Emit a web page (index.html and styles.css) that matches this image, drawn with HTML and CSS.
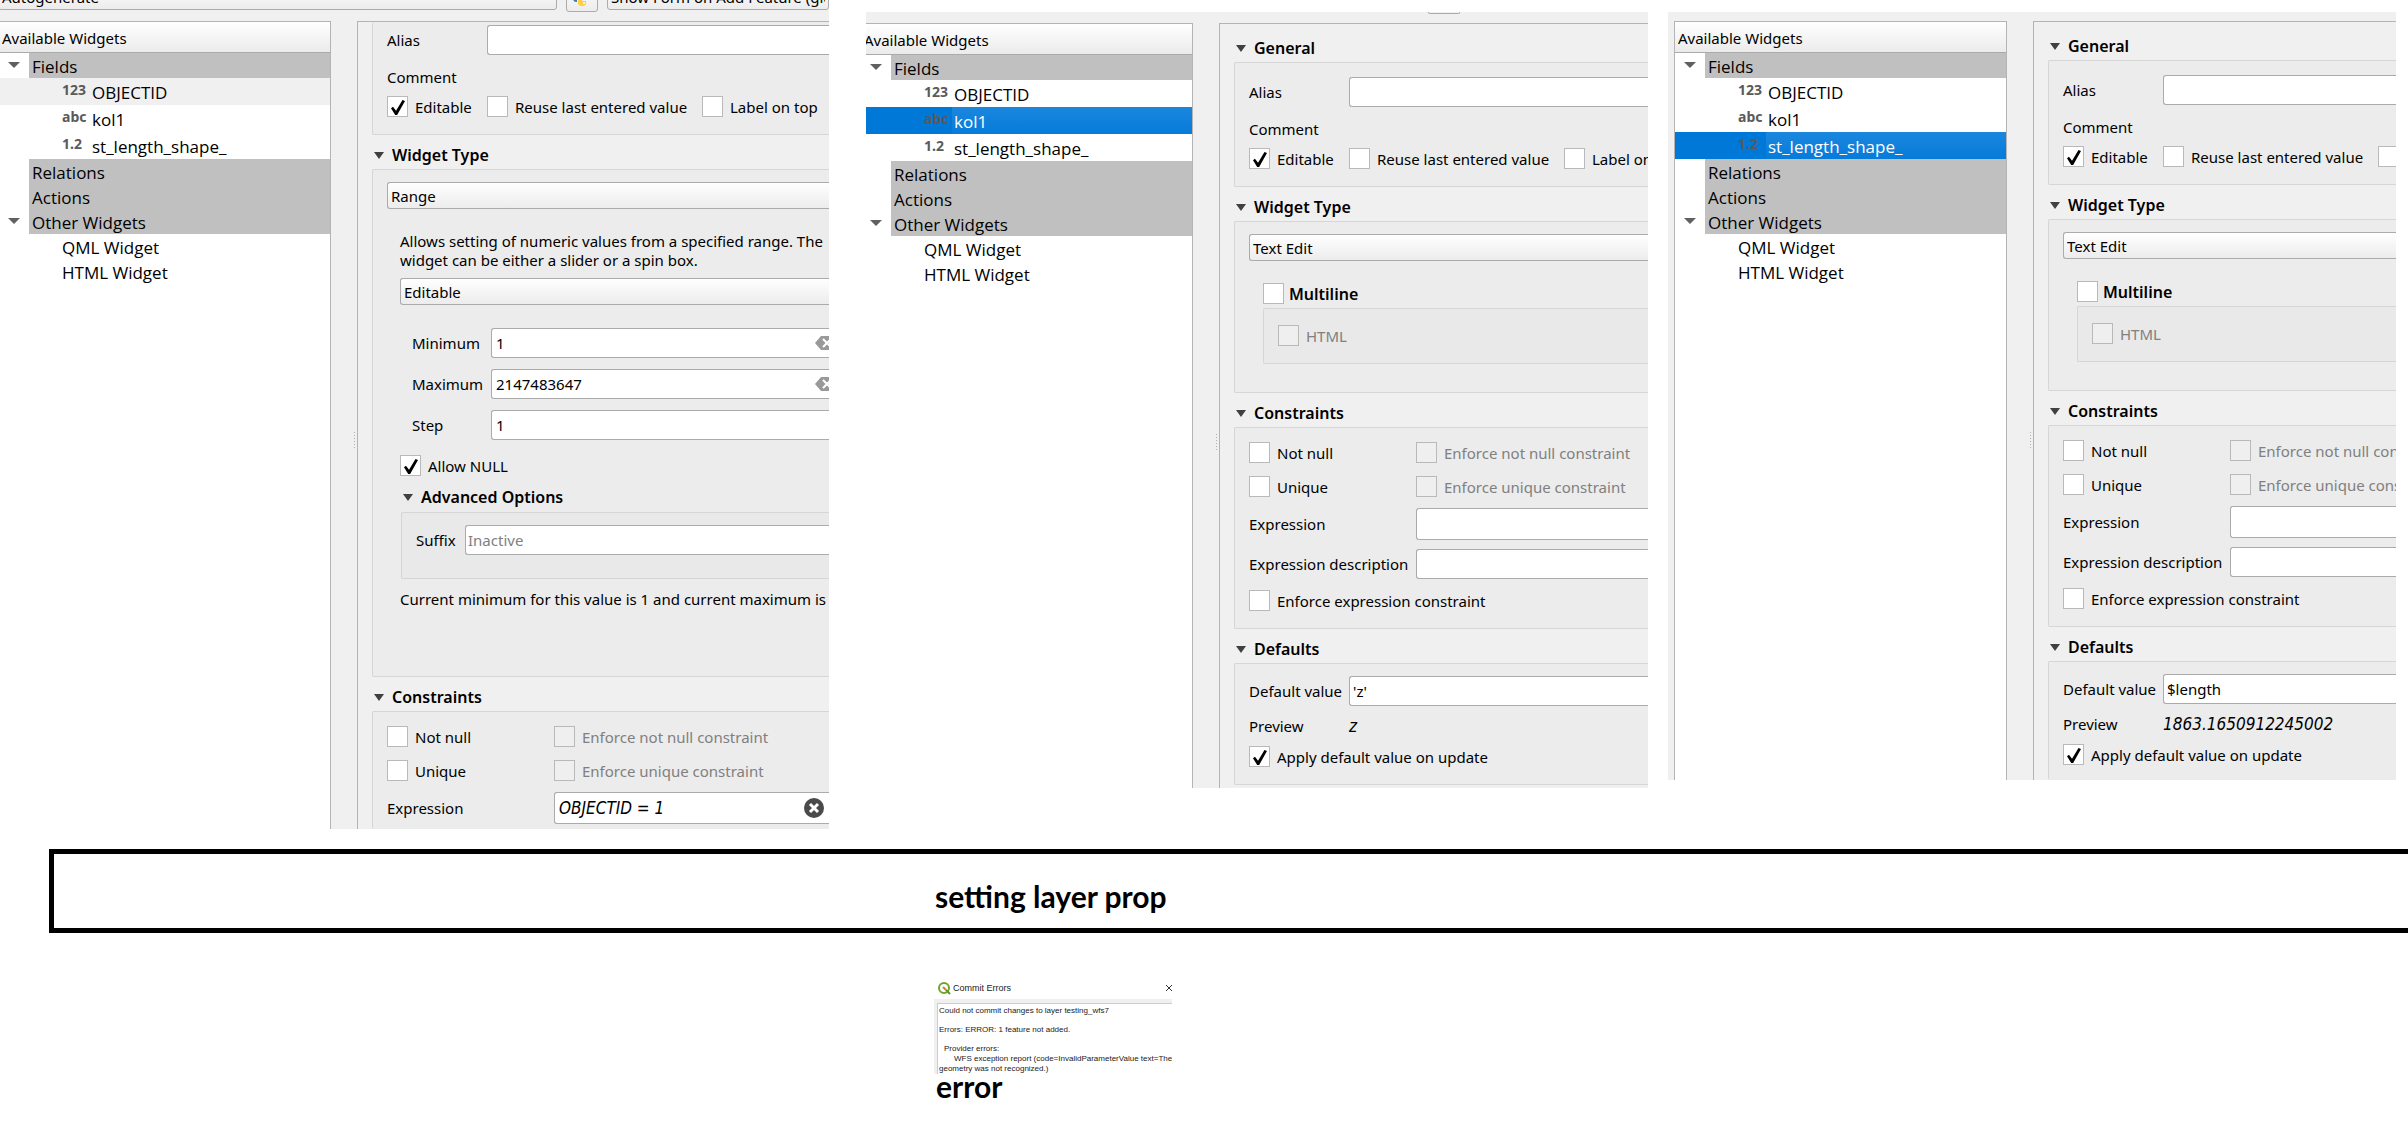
FILE: index.html
```html
<!DOCTYPE html>
<html lang="en">

<head>
    <meta charset="UTF-8">
    <meta name="viewport" content="width=device-width, initial-scale=1.0">
    <title>Setting layer prop</title>
    <link rel="stylesheet" href="styles.css">
</head>

<body>
    <main class="shots">

        <!-- OBJECTID -->
        <section class="shot shot-objectid">
            <div class="toolbar">
                <select class="combo layout-combo" aria-label="Form layout">
                    <option>Autogenerate</option>
                </select>
                <button class="tool-button" type="button" aria-label="Python init function">
                    <svg width="20" height="20" viewBox="0 0 20 20">
                        <path fill="#3f7cac" d="M10 1c-4 0-4 2-4 3v2h4v1H4c-2 0-3 2-3 4s1 4 3 4h1v-3c0-1 1-2 2-2h5c1 0 2-1 2-2V4c0-2-1-3-4-3z" />
                        <path fill="#ffd040" d="M10 19c4 0 4-2 4-3v-2h-4v-1h6c2 0 3-2 3-4s-1-4-3-4h-1v3c0 1-1 2-2 2H8c-1 0-2 1-2 2v4c0 2 1 3 4 3z" />
                        <circle cx="12" cy="16" r="1" fill="#fff" />
                    </svg>
                </button>
                <select class="combo form-combo" aria-label="Show form">
                    <option>Show Form on Add Feature (global settings)</option>
                </select>
            </div>
            <div class="columns">
                <div class="tree">
                    <div class="tree-header">Available Widgets</div>
                    <ul class="rows">
                        <li class="row top open"><span class="name">Fields</span></li>
                        <li class="row field hover"><span class="type">123</span><span class="name">OBJECTID</span></li>
                        <li class="row field"><span class="type">abc</span><span class="name">kol1</span></li>
                        <li class="row field"><span class="type">1.2</span><span class="name">st_length_shape_</span></li>
                        <li class="row top"><span class="name">Relations</span></li>
                        <li class="row top"><span class="name">Actions</span></li>
                        <li class="row top open"><span class="name">Other Widgets</span></li>
                        <li class="row child"><span class="name">QML Widget</span></li>
                        <li class="row child"><span class="name">HTML Widget</span></li>
                    </ul>
                </div>
                <div class="splitter"></div>
                <div class="panel scrolled">
                    <div class="group general cut-top">
                        <div class="form-row">
                            <label for="alias1">Alias</label>
                            <input class="text" type="text" id="alias1">
                        </div>
                        <p class="comment">Comment</p>
                        <div class="checks">
                            <label class="check"><input type="checkbox" checked>Editable</label>
                            <label class="check"><input type="checkbox">Reuse last entered value</label>
                            <label class="check"><input type="checkbox">Label on top</label>
                        </div>
                    </div>

                    <h2 class="title">Widget Type</h2>
                    <div class="group widget-type">
                        <select class="combo" aria-label="Widget type">
                            <option>Range</option>
                        </select>
                        <div class="range">
                            <p class="hint">Allows setting of numeric values from a specified range. The<br>widget can be either a slider or a spin box.</p>
                            <select class="combo" aria-label="Range style">
                                <option>Editable</option>
                            </select>
                            <div class="limits">
                                <label for="min">Minimum</label>
                                <div class="clearable">
                                    <input class="text" type="text" id="min" value="1">
                                    <svg class="clear" width="22" height="14" viewBox="0 0 22 14">
                                        <path fill="#999" d="M6 0h16v14H6L0 7z" />
                                        <path stroke="#fff" stroke-width="2" d="M8 3l8 8M16 3l-8 8" />
                                    </svg>
                                </div>
                                <label for="max">Maximum</label>
                                <div class="clearable">
                                    <input class="text" type="text" id="max" value="2147483647">
                                    <svg class="clear" width="22" height="14" viewBox="0 0 22 14">
                                        <path fill="#999" d="M6 0h16v14H6L0 7z" />
                                        <path stroke="#fff" stroke-width="2" d="M8 3l8 8M16 3l-8 8" />
                                    </svg>
                                </div>
                                <label for="step">Step</label>
                                <input class="text" type="text" id="step" value="1">
                            </div>
                            <label class="check"><input type="checkbox" checked>Allow NULL</label>
                            <h3 class="title">Advanced Options</h3>
                            <div class="group inner suffix">
                                <label for="suffix">Suffix</label>
                                <input class="text" type="text" id="suffix" placeholder="Inactive">
                            </div>
                            <p class="current">Current minimum for this value is 1 and current maximum is</p>
                        </div>
                    </div>

                    <h2 class="title">Constraints</h2>
                    <div class="group constraints cut-bottom">
                        <label class="check"><input type="checkbox">Not null</label>
                        <label class="check"><input type="checkbox" disabled>Enforce not null constraint</label>
                        <label class="check"><input type="checkbox">Unique</label>
                        <label class="check"><input type="checkbox" disabled>Enforce unique constraint</label>
                        <label for="expr1">Expression</label>
                        <div class="clearable">
                            <input class="text tall expression" type="text" id="expr1" value="OBJECTID = 1">
                            <button class="remove" type="button" aria-label="Clear expression">
                                <svg width="22" height="22" viewBox="0 0 22 22">
                                    <circle cx="11" cy="11" r="10" fill="#4a4a4a" />
                                    <path stroke="#fff" stroke-width="3" d="M7 7l8 8M15 7l-8 8" />
                                </svg>
                            </button>
                        </div>
                    </div>
                </div>
            </div>
        </section>

        <!-- kol1 -->
        <section class="shot shot-kol1">
            <div class="button-edge"></div>
            <div class="columns">
                <div class="tree">
                    <div class="tree-header">Available Widgets</div>
                    <ul class="rows">
                        <li class="row top open"><span class="name">Fields</span></li>
                        <li class="row field"><span class="type">123</span><span class="name">OBJECTID</span></li>
                        <li class="row field selected"><span class="type">abc</span><span class="name">kol1</span></li>
                        <li class="row field"><span class="type">1.2</span><span class="name">st_length_shape_</span></li>
                        <li class="row top"><span class="name">Relations</span></li>
                        <li class="row top"><span class="name">Actions</span></li>
                        <li class="row top open"><span class="name">Other Widgets</span></li>
                        <li class="row child"><span class="name">QML Widget</span></li>
                        <li class="row child"><span class="name">HTML Widget</span></li>
                    </ul>
                </div>
                <div class="splitter"></div>
                <div class="panel">
                    <h2 class="title">General</h2>
                    <div class="group general">
                        <div class="form-row">
                            <label for="alias2">Alias</label>
                            <input class="text" type="text" id="alias2">
                        </div>
                        <p class="comment">Comment</p>
                        <div class="checks">
                            <label class="check"><input type="checkbox" checked>Editable</label>
                            <label class="check"><input type="checkbox">Reuse last entered value</label>
                            <label class="check"><input type="checkbox">Label on top</label>
                        </div>
                    </div>

                    <h2 class="title">Widget Type</h2>
                    <div class="group widget-type">
                        <select class="combo" aria-label="Widget type">
                            <option>Text Edit</option>
                        </select>
                        <div class="text-edit">
                            <label class="check strong"><input type="checkbox">Multiline</label>
                            <div class="group inner html">
                                <label class="check"><input type="checkbox" disabled>HTML</label>
                            </div>
                        </div>
                    </div>

                    <h2 class="title">Constraints</h2>
                    <div class="group constraints">
                        <label class="check"><input type="checkbox">Not null</label>
                        <label class="check"><input type="checkbox" disabled>Enforce not null constraint</label>
                        <label class="check"><input type="checkbox">Unique</label>
                        <label class="check"><input type="checkbox" disabled>Enforce unique constraint</label>
                        <label for="expr2">Expression</label>
                        <input class="text tall" type="text" id="expr2">
                        <label for="desc2">Expression description</label>
                        <input class="text" type="text" id="desc2">
                        <label class="check wide"><input type="checkbox">Enforce expression constraint</label>
                    </div>

                    <h2 class="title">Defaults</h2>
                    <div class="group defaults">
                        <div class="form-row">
                            <label for="default2">Default value</label>
                            <input class="text" type="text" id="default2" value="'z'">
                        </div>
                        <div class="form-row preview"><span>Preview</span><em>z</em></div>
                        <label class="check"><input type="checkbox" checked>Apply default value on update</label>
                    </div>
                </div>
            </div>
        </section>

        <!-- st_length_shape_ -->
        <section class="shot shot-length">
            <div class="columns">
                <div class="tree">
                    <div class="tree-header">Available Widgets</div>
                    <ul class="rows">
                        <li class="row top open"><span class="name">Fields</span></li>
                        <li class="row field"><span class="type">123</span><span class="name">OBJECTID</span></li>
                        <li class="row field"><span class="type">abc</span><span class="name">kol1</span></li>
                        <li class="row field selected"><span class="type">1.2</span><span class="name">st_length_shape_</span></li>
                        <li class="row top"><span class="name">Relations</span></li>
                        <li class="row top"><span class="name">Actions</span></li>
                        <li class="row top open"><span class="name">Other Widgets</span></li>
                        <li class="row child"><span class="name">QML Widget</span></li>
                        <li class="row child"><span class="name">HTML Widget</span></li>
                    </ul>
                </div>
                <div class="splitter"></div>
                <div class="panel">
                    <h2 class="title">General</h2>
                    <div class="group general">
                        <div class="form-row">
                            <label for="alias3">Alias</label>
                            <input class="text" type="text" id="alias3">
                        </div>
                        <p class="comment">Comment</p>
                        <div class="checks">
                            <label class="check"><input type="checkbox" checked>Editable</label>
                            <label class="check"><input type="checkbox">Reuse last entered value</label>
                            <label class="check"><input type="checkbox" aria-label="Label on top"></label>
                        </div>
                    </div>

                    <h2 class="title">Widget Type</h2>
                    <div class="group widget-type">
                        <select class="combo" aria-label="Widget type">
                            <option>Text Edit</option>
                        </select>
                        <div class="text-edit">
                            <label class="check strong"><input type="checkbox">Multiline</label>
                            <div class="group inner html">
                                <label class="check"><input type="checkbox" disabled>HTML</label>
                            </div>
                        </div>
                    </div>

                    <h2 class="title">Constraints</h2>
                    <div class="group constraints">
                        <label class="check"><input type="checkbox">Not null</label>
                        <label class="check"><input type="checkbox" disabled>Enforce not null constraint</label>
                        <label class="check"><input type="checkbox">Unique</label>
                        <label class="check"><input type="checkbox" disabled>Enforce unique constraint</label>
                        <label for="expr3">Expression</label>
                        <input class="text tall" type="text" id="expr3">
                        <label for="desc3">Expression description</label>
                        <input class="text" type="text" id="desc3">
                        <label class="check wide"><input type="checkbox">Enforce expression constraint</label>
                    </div>

                    <h2 class="title">Defaults</h2>
                    <div class="group defaults cut-bottom">
                        <div class="form-row">
                            <label for="default3">Default value</label>
                            <input class="text" type="text" id="default3" value="$length">
                        </div>
                        <div class="form-row preview"><span>Preview</span><em>1863.1650912245002</em></div>
                        <label class="check"><input type="checkbox" checked>Apply default value on update</label>
                    </div>
                </div>
            </div>
        </section>
    </main>

    <div class="banner">
        <p class="caption">setting layer prop</p>
    </div>

    <section class="error">
        <div class="dialog">
            <div class="dialog-title">
                <svg width="13" height="13" viewBox="0 0 13 13">
                    <circle cx="6" cy="6" r="5" fill="none" stroke="#6fa52a" stroke-width="2" />
                    <path stroke="#589632" stroke-width="2" d="M8 8l4 4" />
                    <path stroke="#ee7913" stroke-width="2" d="M5 5l3 3" />
                </svg>
                <span>Commit Errors</span>
                <button class="close" type="button" aria-label="Close">
                    <svg width="8" height="8" viewBox="0 0 8 8">
                        <path stroke="#333" d="M1 1l6 6M7 1l-6 6" />
                    </svg>
                </button>
            </div>
            <div class="dialog-body">
                <div class="message">
                    <p>Could not commit changes to layer testing_wfs7</p>
                    <p>Errors: ERROR: 1 feature not added.</p>
                    <p class="provider">Provider errors:</p>
                    <p class="report">WFS exception report (code=InvalidParameterValue text=The</p>
                    <p>geometry was not recognized.)</p>
                </div>
            </div>
        </div>
        <p class="caption">error</p>
    </section>
</body>

</html>
```
FILE: styles.css
```css
* {
    box-sizing: border-box;
}

body,
h2,
h3,
p,
ul {
    margin: 0;
    padding: 0;
}

body {
    font-family: "Noto Sans", sans-serif;
    font-size: 15px;
    line-height: 20px;
    color: #000;
    background-color: #fff;
    overflow-x: hidden;
}

input,
select,
button {
    font: inherit;
    color: inherit;
    margin: 0;
}

/* Three cropped windows side by side */
.shots {
    display: grid;
    grid-template-columns: 846fr 782fr 728fr;
    column-gap: 20px;
    align-items: start;
    padding-right: 12px;
}

.shot {
    background-color: #f0f0f0;
    overflow: hidden;
    white-space: nowrap;
    min-width: 0;
}

.shot-objectid {
    margin-right: 17px;
}

.shot-kol1,
.shot-length {
    margin-top: 12px;
}

.shot-length {
    padding-top: 9px;
}

.columns {
    display: flex;
}

.shot-objectid .columns {
    margin-left: -2px;
}

.shot-kol1 .columns {
    margin-left: -6px;
}

.shot-length .columns {
    margin-left: 6px;
}

/* Toolbar, cut by the top of the window */
.toolbar {
    display: flex;
    align-items: center;
    gap: 9px;
    height: 31px;
    margin: -19px 0 9px;
}

.layout-combo {
    flex: 0 0 559px;
    margin-left: -2px;
}

.form-combo {
    flex: 1;
    min-width: 0;
}

.tool-button {
    flex: 0 0 32px;
    height: 31px;
    padding: 5px;
    border: 1px solid #ababab;
    border-radius: 3px;
    background: linear-gradient(#fff, #ececec);
}

.button-edge {
    width: 32px;
    height: 2px;
    margin: 0 0 9px 562px;
    border: 1px solid #ababab;
    border-top: 0;
    border-radius: 0 0 3px 3px;
}

/* Tree */
.tree {
    flex: 0 0 333px;
    border: 1px solid #b4b4b4;
    border-bottom: 0;
    background-color: #fff;
}

.tree-header {
    height: 31px;
    padding-left: 3px;
    line-height: 32px;
    border-bottom: 1px solid #ababab;
    background: linear-gradient(#fff, #ebebeb);
}

.rows {
    list-style: none;
    font-family: "Open Sans", sans-serif;
    font-size: 17px;
}

.row {
    display: flex;
    position: relative;
    height: 25px;
    line-height: 28px;
}

.row .name {
    flex: 1;
}

.row.top {
    padding-left: 30px;
}

.row.top .name {
    padding-left: 3px;
    background-color: #c0c0c0;
}

.row.open::before {
    content: "";
    position: absolute;
    left: 9px;
    top: 9px;
    border: 6px solid transparent;
    border-top-color: #606060;
    border-bottom: 0;
}

.row.field {
    height: 27px;
    padding-left: 63px;
    line-height: 30px;
}

.row.child {
    padding-left: 63px;
}

.row .type {
    width: 28px;
    font-family: "Noto Sans", sans-serif;
    font-size: 14px;
    font-weight: bold;
    line-height: 24px;
    color: #5a5a5a;
}

.row.field .name {
    padding-left: 2px;
}

.row.hover {
    background-color: #f0f0f0;
}

.row.selected {
    background-color: #0078d7;
    color: #fff;
}

.row.selected .name {
    background: linear-gradient(#1b87de, #067bd9);
}

.splitter {
    flex: 0 0 26px;
}

.splitter::before {
    content: "";
    display: block;
    width: 1px;
    height: 17px;
    margin: 411px 0 0 23px;
    background: repeating-linear-gradient(#b0b0b0 0 1px, transparent 1px 3px);
}

/* Form panel */
.panel {
    flex: 1;
    min-width: 0;
    padding: 4px 0 3px 14px;
    border-left: 1px solid #b4b4b4;
    border-top: 1px solid #b4b4b4;
}

.panel.scrolled {
    padding-top: 0;
    padding-bottom: 0;
}

.shot-length .panel {
    padding-bottom: 0;
}

.title {
    display: flex;
    align-items: center;
    gap: 8px;
    height: 34px;
    padding: 6px 0 0 2px;
    font-size: 16px;
    font-weight: 600;
}

.title::before {
    content: "";
    border: 5px solid transparent;
    border-top: 7px solid #404040;
    border-bottom: 0;
}

.group {
    border: 1px solid #d6d6d6;
    border-right: 0;
    border-radius: 2px 0 0 2px;
    background-color: #ececec;
}

.group.cut-top {
    border-top: 0;
}

.group.cut-bottom {
    border-bottom: 0;
}

.group.inner {
    background-color: #e9e9e9;
}

.text {
    width: 100%;
    height: 30px;
    padding: 0 4px;
    border: 1px solid #ababab;
    border-right: 0;
    border-radius: 3px 0 0 3px;
    background-color: #fff;
    outline: 0;
}

.text.tall {
    height: 32px;
}

.text::placeholder {
    color: #808080;
    opacity: 1;
}

.combo {
    appearance: none;
    display: block;
    width: 100%;
    height: 27px;
    padding: 0 3px;
    border: 1px solid #ababab;
    border-radius: 3px;
    background: linear-gradient(#fff, #ececec);
}

.group .combo {
    border-right: 0;
    border-radius: 3px 0 0 3px;
}

.check {
    display: flex;
    align-items: center;
    gap: 7px;
    height: 21px;
}

.check input {
    appearance: none;
    flex: 0 0 21px;
    height: 21px;
    border: 1px solid #b9b9b9;
    background-color: #fff;
}

.check input:checked {
    position: relative;
}

/* Tick mark */
.check input:checked::before {
    content: "";
    position: absolute;
    left: 3px;
    top: 3px;
    width: 14px;
    height: 15px;
    background-color: #000;
    clip-path: polygon(0 55%, 14% 45%, 36% 72%, 82% 0, 100% 6%, 44% 100%, 30% 100%);
}

.check input:disabled {
    background-color: #efefef;
}

.check:has(input:disabled) {
    color: #808080;
}

.check.strong {
    gap: 5px;
    font-size: 16px;
    font-weight: 600;
}

.form-row {
    display: grid;
    grid-template-columns: 100px 1fr;
    align-items: center;
}

.general {
    padding: 14px 0 17px 14px;
}

.general.cut-top {
    padding-top: 3px;
}

.comment {
    margin: 12px 0 9px;
}

.checks {
    display: grid;
    grid-template-columns: 100px 215px auto;
}

.widget-type {
    padding: 12px 0 0 14px;
}

/* Range widget options */
.range {
    padding: 23px 0 67px 13px;
}

.hint {
    margin-bottom: 8px;
    line-height: 19px;
}

.limits {
    display: grid;
    grid-template-columns: 79px 1fr;
    align-items: center;
    row-gap: 11px;
    padding: 23px 0 15px 12px;
}

.range .title {
    height: 36px;
    padding-left: 3px;
}

.clearable {
    position: relative;
}

.clear {
    position: absolute;
    right: -8px;
    top: 8px;
}

.remove {
    position: absolute;
    right: 4px;
    top: 5px;
    width: 22px;
    height: 22px;
    padding: 0;
    border: 0;
    background: none;
}

.suffix {
    display: grid;
    grid-template-columns: 49px 1fr;
    align-items: center;
    margin-left: 1px;
    padding: 12px 0 23px 14px;
}

.suffix .text {
    padding-left: 2px;
}

.current {
    margin-top: 10px;
}

/* Text edit options */
.text-edit {
    padding: 22px 0 28px 14px;
}

.html {
    margin-top: 4px;
    padding: 16px 0 17px 14px;
}

.constraints {
    display: grid;
    grid-template-columns: 167px 1fr;
    align-items: center;
    padding: 14px 0 17px 14px;
}

.constraints .check {
    margin-bottom: 13px;
}

.constraints > .text,
.constraints .clearable {
    margin: -2px 0 11px;
}

.constraints > label:not(.check) {
    margin: -2px 0 11px;
}

.constraints .check.wide {
    grid-column: 1 / 3;
    margin: 0;
}

.constraints.cut-bottom {
    padding-bottom: 0;
}

.constraints.cut-bottom .clearable,
.constraints.cut-bottom > label:not(.check) {
    margin-bottom: 5px;
}

.expression,
.preview em {
    font-family: "DejaVu Sans Condensed", "DejaVu Sans", sans-serif;
    font-size: 17px;
    font-style: italic;
}

.defaults {
    padding: 12px 0 17px 14px;
}

.defaults.cut-bottom {
    padding-bottom: 15px;
}

.defaults .text {
    padding: 0 3px;
}

.preview {
    margin: 10px 0;
}

/* Captions */
.banner {
    height: 84px;
    margin: 20px 0 0 49px;
    padding: 30px 0 0 881px;
    border: 5px solid #000;
    border-right: 0;
}

.caption {
    font-family: Lato, sans-serif;
    font-size: 30px;
    font-weight: bold;
    line-height: 24px;
}

.error {
    margin: 44px 0 0 934px;
}

.error .caption {
    padding-left: 2px;
}

/* Commit errors dialog */
.dialog {
    width: 238px;
    overflow: hidden;
    white-space: nowrap;
    font-family: "Liberation Sans", sans-serif;
    color: #222;
}

.dialog-title {
    display: flex;
    align-items: center;
    gap: 2px;
    height: 22px;
    padding-left: 4px;
    font-size: 9px;
}

.close {
    width: 8px;
    height: 8px;
    margin: 0 -1px 0 auto;
    padding: 0;
    border: 0;
    background: none;
    line-height: 0;
}

.dialog-body {
    padding: 4px 0 0 3px;
    background-color: #f0f0f0;
}

.message {
    padding: 2px 0 0 1px;
    border: 1px solid #ccc;
    border-right: 0;
    border-bottom: 0;
    background-color: #fff;
    font-size: 8px;
    line-height: 10px;
}

.message p:nth-child(-n+2) {
    margin-bottom: 9px;
}

.message .provider {
    padding-left: 5px;
}

.message .report {
    padding-left: 15px;
}
```
